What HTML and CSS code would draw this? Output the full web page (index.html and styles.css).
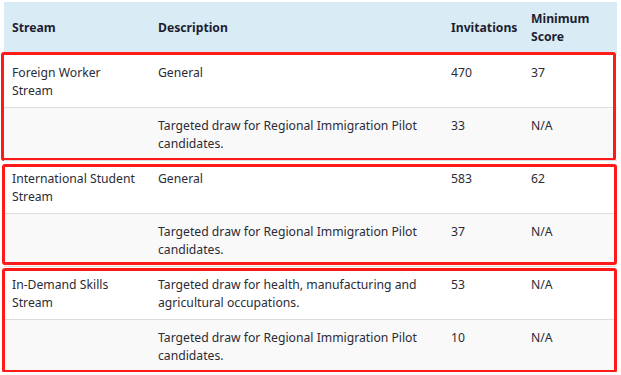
FILE: index.html
```html
<!DOCTYPE html>
<html lang="en">
<head>
<meta charset="utf-8">
<title>Draw results</title>
<link rel="stylesheet" href="styles.css">
</head>
<body>
<div class="table">
  <div class="row head">
    <div class="cell">Stream</div>
    <div class="cell">Description</div>
    <div class="cell">Invitations</div>
    <div class="cell">Minimum Score</div>
  </div>
  <div class="group g1">
    <div class="row">
      <div class="cell">Foreign Worker Stream</div>
      <div class="cell">General</div>
      <div class="cell">470</div>
      <div class="cell">37</div>
    </div>
    <div class="row alt">
      <div class="cell"></div>
      <div class="cell">Targeted draw for Regional Immigration Pilot candidates.</div>
      <div class="cell">33</div>
      <div class="cell">N/A</div>
    </div>
  </div>
  <div class="group g2">
    <div class="row">
      <div class="cell">International Student Stream</div>
      <div class="cell">General</div>
      <div class="cell">583</div>
      <div class="cell">62</div>
    </div>
    <div class="row alt">
      <div class="cell"></div>
      <div class="cell">Targeted draw for Regional Immigration Pilot candidates.</div>
      <div class="cell">37</div>
      <div class="cell">N/A</div>
    </div>
  </div>
  <div class="group g3">
    <div class="row">
      <div class="cell">In-Demand Skills Stream</div>
      <div class="cell">Targeted draw for health, manufacturing and agricultural occupations.</div>
      <div class="cell">53</div>
      <div class="cell">N/A</div>
    </div>
    <div class="row alt">
      <div class="cell"></div>
      <div class="cell">Targeted draw for Regional Immigration Pilot candidates.</div>
      <div class="cell">10</div>
      <div class="cell">N/A</div>
    </div>
  </div>
</div>
</body>
</html>
```

FILE: styles.css
```css
html, body {
  margin: 0;
  padding: 0;
  background: #ffffff;
}

body {
  font-family: "Noto Sans", "Open Sans", sans-serif;
  font-size: 12.2px;
  line-height: 18px;
  color: #2b2b36;
}

.table {
  width: 613px;
  margin: 2px 4px 0 4px;
}

.row {
  display: grid;
  grid-template-columns: 146px 293px 80px 94px;
  border-top: 1px solid #dddddd;
}

.cell {
  padding: 9px 8px 7px;
  min-height: 36px;
}

.head {
  background: #d9ecf5;
  border-top: 0;
  align-items: center;
  font-weight: bold;
  color: #1e1e32;
  min-height: 52px;
}

.head .cell {
  padding: 0 8px;
  min-height: 0;
}

.alt {
  background: #f9f9f9;
}

.group {
  position: relative;
}

.group::after {
  content: "";
  position: absolute;
  border: 3px solid #ff1a1a;
  border-radius: 3px;
  pointer-events: none;
}

.g1::after {
  top: -2px;
  bottom: -1px;
  left: -3px;
  right: 1px;
}

.g2::after {
  top: 4px;
  bottom: 1px;
  left: -2px;
  right: 0;
}

.g3::after {
  top: 2px;
  bottom: -1px;
  left: -2px;
  right: 0;
}
```
